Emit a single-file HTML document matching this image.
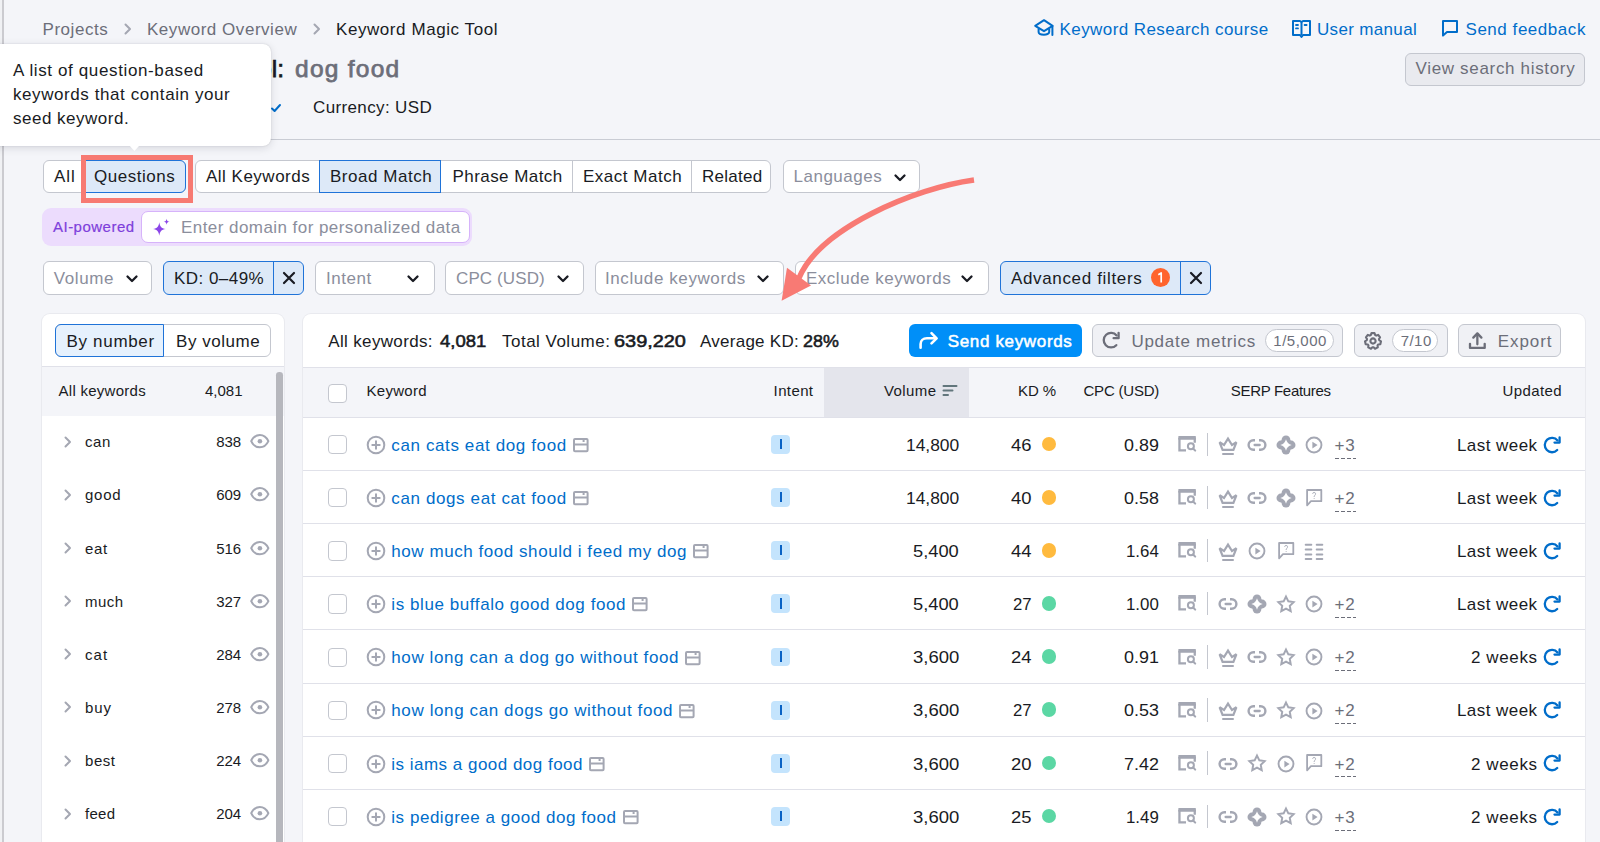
<!DOCTYPE html>
<html><head><meta charset="utf-8"><style>
html,body{margin:0;padding:0;}
body{width:1600px;height:842px;overflow:hidden;position:relative;background:#f4f5f9;font-family:"Liberation Sans",sans-serif;}
.t{position:absolute;white-space:nowrap;}
svg{position:absolute;overflow:visible;}
</style></head><body>
<div style="position:absolute;left:0.00px;top:0.00px;width:2.00px;height:842.00px;background:#f0f1f4"></div>
<div style="position:absolute;left:2.00px;top:0.00px;width:2.00px;height:842.00px;background:#cbcbd0"></div>
<div id="t1" class="t" style="left:42.50px;top:21.00px;font-size:17px;line-height:17px;color:#6c6e79;font-weight:400;letter-spacing:0.539px;">Projects</div>
<svg style="position:absolute;left:124.00px;top:23.00px;" width="8" height="12" viewBox="0 0 8 12" fill="none"><path d="M1.5 1.5 L6 6 L1.5 10.5" stroke="#a4a7b2" stroke-width="2" stroke-linecap="round" stroke-linejoin="round"/></svg>
<div id="t2" class="t" style="left:147.00px;top:21.00px;font-size:17px;line-height:17px;color:#6c6e79;font-weight:400;letter-spacing:0.531px;">Keyword Overview</div>
<svg style="position:absolute;left:313.00px;top:23.00px;" width="8" height="12" viewBox="0 0 8 12" fill="none"><path d="M1.5 1.5 L6 6 L1.5 10.5" stroke="#a4a7b2" stroke-width="2" stroke-linecap="round" stroke-linejoin="round"/></svg>
<div id="t3" class="t" style="left:336.00px;top:21.00px;font-size:17px;line-height:17px;color:#191b23;font-weight:400;letter-spacing:0.569px;">Keyword Magic Tool</div>
<svg style="position:absolute;left:1034.00px;top:19.00px;" width="20" height="18" viewBox="0 0 20 18" fill="none"><path d="M10 1.2 L1.2 6.8 L10 12.2 L18.6 6.8 Z" stroke="#006dca" stroke-width="2" stroke-linejoin="round"/><path d="M4.6 9.4 V13 C4.6 16.6 15.2 16.6 15.2 13 V9.4" stroke="#006dca" stroke-width="2"/><path d="M18.4 7 V16" stroke="#006dca" stroke-width="2" stroke-linecap="round"/></svg>
<div id="t4" class="t" style="left:1059.50px;top:21.00px;font-size:17px;line-height:17px;color:#006dca;font-weight:400;letter-spacing:0.423px;">Keyword Research course</div>
<svg style="position:absolute;left:1292.00px;top:19.00px;" width="19" height="19" viewBox="0 0 19 19" fill="none"><path d="M1 2 H8 L9.5 3 L11 2 H18 V16 H11 L9.5 18 L8 16 H1 Z" stroke="#006dca" stroke-width="2" stroke-linejoin="round"/><path d="M9.5 3 V16" stroke="#006dca" stroke-width="2"/><path d="M4 6 H6 M4 9.4 H6 M12.6 6 H14.6" stroke="#006dca" stroke-width="1.8" stroke-linecap="round"/></svg>
<div id="t5" class="t" style="left:1317.00px;top:21.00px;font-size:17px;line-height:17px;color:#006dca;font-weight:400;letter-spacing:0.332px;">User manual</div>
<svg style="position:absolute;left:1441.00px;top:19.00px;" width="18" height="18" viewBox="0 0 18 18" fill="none"><path d="M2 16.6 V2 H16 V13 H6 L2 16.6 Z" stroke="#006dca" stroke-width="2" stroke-linejoin="round"/></svg>
<div id="t6" class="t" style="left:1465.50px;top:21.00px;font-size:17px;line-height:17px;color:#006dca;font-weight:400;letter-spacing:0.538px;">Send feedback</div>
<div style="position:absolute;left:1404.50px;top:52.50px;width:180.50px;height:33.00px;background:#e9eaef;border:1px solid #c4c7cf;border-radius:6px;box-sizing:border-box"></div>
<div id="t7" class="t" style="left:1415.50px;top:60.00px;font-size:17px;line-height:17px;color:#6c6e79;font-weight:400;letter-spacing:0.672px;">View search history</div>
<div id="t8" class="t" style="left:284.00px;top:57.00px;font-size:24.5px;line-height:24.5px;color:#191b23;font-weight:400;letter-spacing:0.000px;-webkit-text-stroke:0.75px #191b23;transform:translateX(-100%)">Keyword Magic Tool:</div>
<div id="t9" class="t" style="left:295.00px;top:57.00px;font-size:24.5px;line-height:24.5px;color:#6c6e79;font-weight:400;letter-spacing:1.262px;-webkit-text-stroke:0.75px #6c6e79;">dog food</div>
<div id="t10" class="t" style="left:30.00px;top:99.00px;font-size:17px;line-height:17px;color:#191b23;font-weight:400;letter-spacing:0.000px;">Database: United States</div>
<svg style="position:absolute;left:270.00px;top:103.00px;" width="12" height="10" viewBox="0 0 12 10" fill="none"><path d="M2 5.5 L4.6 8 L10 2" stroke="#006dca" stroke-width="2" stroke-linecap="round" stroke-linejoin="round"/></svg>
<div id="t11" class="t" style="left:313.00px;top:99.00px;font-size:17px;line-height:17px;color:#191b23;font-weight:400;letter-spacing:0.366px;">Currency: USD</div>
<div style="position:absolute;left:4.00px;top:138.50px;width:1596.00px;height:1.00px;background:#c9ccd4"></div>
<div style="position:absolute;left:-10.00px;top:44.00px;width:281.00px;height:101.70px;background:#fff;border-radius:8px;box-shadow:0 2px 8px rgba(25,27,35,0.13),0 0 1.5px rgba(25,27,35,0.18)"></div>
<svg style="position:absolute;left:127.00px;top:144.00px;" width="16" height="8" viewBox="0 0 16 8" fill="none"><path d="M1 0 L7.4 7 L13.8 0 Z" fill="#fff"/></svg>
<div id="t12" class="t" style="left:13.00px;top:62.00px;font-size:17px;line-height:17px;color:#191b23;font-weight:400;letter-spacing:0.626px;">A list of question-based</div>
<div id="t13" class="t" style="left:13.00px;top:86.00px;font-size:17px;line-height:17px;color:#191b23;font-weight:400;letter-spacing:0.579px;">keywords that contain your</div>
<div id="t14" class="t" style="left:13.00px;top:110.00px;font-size:17px;line-height:17px;color:#191b23;font-weight:400;letter-spacing:0.506px;">seed keyword.</div>
<div style="position:absolute;left:42.50px;top:159.60px;width:143.00px;height:33.20px;background:#fff;border:1px solid #c4c7cf;border-radius:6px;box-sizing:border-box;"></div>
<div style="position:absolute;left:82.00px;top:159.60px;width:103.50px;height:33.20px;background:#dde9f8;border:1px solid #1f73d8;border-radius:0 6px 6px 0;box-sizing:border-box;"></div>
<div id="t15" class="t" style="left:54.00px;top:168.00px;font-size:17px;line-height:17px;color:#191b23;font-weight:400;letter-spacing:0.894px;">All</div>
<div id="t16" class="t" style="left:94.00px;top:168.00px;font-size:17px;line-height:17px;color:#191b23;font-weight:400;letter-spacing:0.517px;">Questions</div>
<div style="position:absolute;left:195.00px;top:159.60px;width:576.00px;height:33.20px;background:#fff;border:1px solid #c4c7cf;border-radius:6px;box-sizing:border-box;"></div>
<div style="position:absolute;left:318.75px;top:159.60px;width:122.50px;height:33.20px;background:#dde9f8;border:1px solid #1f73d8;border-radius:0;box-sizing:border-box;"></div>
<div style="position:absolute;left:572.20px;top:160.60px;width:1.00px;height:31.20px;background:#c4c7cf"></div>
<div style="position:absolute;left:690.70px;top:160.60px;width:1.00px;height:31.20px;background:#c4c7cf"></div>
<div id="t17" class="t" style="left:206.00px;top:168.00px;font-size:17px;line-height:17px;color:#191b23;font-weight:400;letter-spacing:0.493px;">All Keywords</div>
<div id="t18" class="t" style="left:330.00px;top:168.00px;font-size:17px;line-height:17px;color:#191b23;font-weight:400;letter-spacing:0.530px;">Broad Match</div>
<div id="t19" class="t" style="left:452.50px;top:168.00px;font-size:17px;line-height:17px;color:#191b23;font-weight:400;letter-spacing:0.436px;">Phrase Match</div>
<div id="t20" class="t" style="left:583.00px;top:168.00px;font-size:17px;line-height:17px;color:#191b23;font-weight:400;letter-spacing:0.515px;">Exact Match</div>
<div id="t21" class="t" style="left:702.00px;top:168.00px;font-size:17px;line-height:17px;color:#191b23;font-weight:400;letter-spacing:0.264px;">Related</div>
<div style="position:absolute;left:782.50px;top:159.60px;width:137.50px;height:33.20px;background:#fff;border:1px solid #c4c7cf;border-radius:6px;box-sizing:border-box;"></div>
<div id="t22" class="t" style="left:793.50px;top:168.00px;font-size:17px;line-height:17px;color:#8b8e9c;font-weight:400;letter-spacing:0.505px;">Languages</div>
<svg style="position:absolute;left:893.80px;top:174.30px;" width="12" height="8" viewBox="0 0 12 8" fill="none"><path d="M1.5 1.5 L6 6 L10.5 1.5" stroke="#191b23" stroke-width="2.3" stroke-linecap="round" stroke-linejoin="round"/></svg>
<div style="position:absolute;left:80.60px;top:155.00px;width:112.40px;height:47.50px;border:5.6px solid #f77a72;box-sizing:border-box"></div>
<div style="position:absolute;left:42.00px;top:207.80px;width:430.00px;height:38.20px;background:#ecdcfd;border-radius:9px"></div>
<div style="position:absolute;left:141.20px;top:210.60px;width:328.50px;height:32.80px;background:#fff;border:1px solid #d6b3fa;border-radius:7px;box-sizing:border-box"></div>
<div id="t23" class="t" style="left:53.00px;top:219.00px;font-size:15px;line-height:15px;color:#7e3fdb;font-weight:400;letter-spacing:0.482px;-webkit-text-stroke:0.2px #7e3fdb;">AI-powered</div>
<svg style="position:absolute;left:152.00px;top:217.50px;" width="19" height="19" viewBox="0 0 19 19" fill="none"><path d="M7.3 4.2 C7.9 8.6 9.3 10.2 13.6 11 C9.3 11.8 7.9 13.4 7.3 17.8 C6.7 13.4 5.3 11.8 1 11 C5.3 10.2 6.7 8.6 7.3 4.2 Z" fill="#8b45e8"/><path d="M14.6 0.8 C14.9 2.8 15.6 3.5 17.6 3.8 C15.6 4.1 14.9 4.8 14.6 6.8 C14.3 4.8 13.6 4.1 11.6 3.8 C13.6 3.5 14.3 2.8 14.6 0.8 Z" fill="#8b45e8"/></svg>
<div id="t24" class="t" style="left:181.00px;top:219.00px;font-size:17px;line-height:17px;color:#8b8e9c;font-weight:400;letter-spacing:0.442px;">Enter domain for personalized data</div>
<div style="position:absolute;left:42.50px;top:261.30px;width:109.70px;height:33.70px;background:#fff;border:1px solid #c4c7cf;border-radius:6px;box-sizing:border-box;"></div>
<div id="t25" class="t" style="left:53.80px;top:270.00px;font-size:17px;line-height:17px;color:#8b8e9c;font-weight:400;letter-spacing:0.596px;">Volume</div>
<svg style="position:absolute;left:125.80px;top:275.30px;" width="12" height="8" viewBox="0 0 12 8" fill="none"><path d="M1.5 1.5 L6 6 L10.5 1.5" stroke="#191b23" stroke-width="2.3" stroke-linecap="round" stroke-linejoin="round"/></svg>
<div style="position:absolute;left:163.00px;top:261.30px;width:141.00px;height:33.70px;background:#dde9f8;border:1px solid #1f73d8;border-radius:6px;box-sizing:border-box;"></div>
<div style="position:absolute;left:273.30px;top:262.30px;width:1.00px;height:31.70px;background:#1f73d8"></div>
<div id="t26" class="t" style="left:174.00px;top:270.00px;font-size:17px;line-height:17px;color:#191b23;font-weight:400;letter-spacing:0.460px;">KD: 0–49%</div>
<svg style="position:absolute;left:282.00px;top:271.00px;" width="14" height="14" viewBox="0 0 14 14" fill="none"><path d="M2 2 L12 12 M12 2 L2 12" stroke="#191b23" stroke-width="2.2" stroke-linecap="round"/></svg>
<div style="position:absolute;left:314.50px;top:261.30px;width:120.00px;height:33.70px;background:#fff;border:1px solid #c4c7cf;border-radius:6px;box-sizing:border-box;"></div>
<div id="t27" class="t" style="left:326.00px;top:270.00px;font-size:17px;line-height:17px;color:#8b8e9c;font-weight:400;letter-spacing:0.529px;">Intent</div>
<svg style="position:absolute;left:407.30px;top:275.30px;" width="12" height="8" viewBox="0 0 12 8" fill="none"><path d="M1.5 1.5 L6 6 L10.5 1.5" stroke="#191b23" stroke-width="2.3" stroke-linecap="round" stroke-linejoin="round"/></svg>
<div style="position:absolute;left:445.00px;top:261.30px;width:138.80px;height:33.70px;background:#fff;border:1px solid #c4c7cf;border-radius:6px;box-sizing:border-box;"></div>
<div id="t28" class="t" style="left:456.00px;top:270.00px;font-size:17px;line-height:17px;color:#8b8e9c;font-weight:400;letter-spacing:0.106px;">CPC (USD)</div>
<svg style="position:absolute;left:556.80px;top:275.30px;" width="12" height="8" viewBox="0 0 12 8" fill="none"><path d="M1.5 1.5 L6 6 L10.5 1.5" stroke="#191b23" stroke-width="2.3" stroke-linecap="round" stroke-linejoin="round"/></svg>
<div style="position:absolute;left:594.50px;top:261.30px;width:189.30px;height:33.70px;background:#fff;border:1px solid #c4c7cf;border-radius:6px;box-sizing:border-box;"></div>
<div id="t29" class="t" style="left:605.00px;top:270.00px;font-size:17px;line-height:17px;color:#8b8e9c;font-weight:400;letter-spacing:0.589px;">Include keywords</div>
<svg style="position:absolute;left:757.30px;top:275.30px;" width="12" height="8" viewBox="0 0 12 8" fill="none"><path d="M1.5 1.5 L6 6 L10.5 1.5" stroke="#191b23" stroke-width="2.3" stroke-linecap="round" stroke-linejoin="round"/></svg>
<div style="position:absolute;left:795.30px;top:261.30px;width:193.70px;height:33.70px;background:#fff;border:1px solid #c4c7cf;border-radius:6px;box-sizing:border-box;"></div>
<div id="t30" class="t" style="left:806.00px;top:270.00px;font-size:17px;line-height:17px;color:#8b8e9c;font-weight:400;letter-spacing:0.512px;">Exclude keywords</div>
<svg style="position:absolute;left:961.30px;top:275.30px;" width="12" height="8" viewBox="0 0 12 8" fill="none"><path d="M1.5 1.5 L6 6 L10.5 1.5" stroke="#191b23" stroke-width="2.3" stroke-linecap="round" stroke-linejoin="round"/></svg>
<div style="position:absolute;left:999.80px;top:261.30px;width:211.00px;height:33.70px;background:#dde9f8;border:1px solid #1f73d8;border-radius:6px;box-sizing:border-box;"></div>
<div style="position:absolute;left:1180.40px;top:262.30px;width:1.00px;height:31.70px;background:#1f73d8"></div>
<div id="t31" class="t" style="left:1011.00px;top:270.00px;font-size:17px;line-height:17px;color:#191b23;font-weight:400;letter-spacing:0.649px;">Advanced filters</div>
<div style="position:absolute;left:1151.00px;top:268.10px;width:19.20px;height:19.20px;background:#ff642d;border-radius:50%"></div>
<svg style="position:absolute;left:1150.00px;top:268.00px;" width="20" height="20" viewBox="0 0 20 20" fill="none"><path d="M8.3 6.8 L11.2 5 V14.6" stroke="#fff" stroke-width="1.7" stroke-linejoin="round" fill="none"/></svg>
<svg style="position:absolute;left:1189.00px;top:271.00px;" width="14" height="14" viewBox="0 0 14 14" fill="none"><path d="M2 2 L12 12 M12 2 L2 12" stroke="#191b23" stroke-width="2.2" stroke-linecap="round"/></svg>
<div style="position:absolute;left:42.00px;top:313.75px;width:242.00px;height:560.00px;background:#fff;border-radius:8px;box-shadow:0 0 0 1px #e9eaef"></div>
<div style="position:absolute;left:55.00px;top:324.30px;width:216.00px;height:32.70px;background:#fff;border:1px solid #c4c7cf;border-radius:6px;box-sizing:border-box;"></div>
<div style="position:absolute;left:55.00px;top:324.30px;width:109.00px;height:32.70px;background:#e6f1fd;border:1px solid #1f73d8;border-radius:6px 0 0 6px;box-sizing:border-box;"></div>
<div id="t33" class="t" style="left:66.50px;top:333.00px;font-size:17px;line-height:17px;color:#191b23;font-weight:400;letter-spacing:0.684px;">By number</div>
<div id="t34" class="t" style="left:176.00px;top:333.00px;font-size:17px;line-height:17px;color:#191b23;font-weight:400;letter-spacing:0.540px;">By volume</div>
<div style="position:absolute;left:42.00px;top:366.00px;width:242.00px;height:1.00px;background:#e0e1e9"></div>
<div style="position:absolute;left:42.00px;top:367.00px;width:242.00px;height:48.50px;background:#f4f5f9"></div>
<div id="t35" class="t" style="left:58.60px;top:383.00px;font-size:15px;line-height:15px;color:#191b23;font-weight:400;letter-spacing:0.259px;">All keywords</div>
<div id="t36" class="t" style="left:205.00px;top:383.00px;font-size:15px;line-height:15px;color:#191b23;font-weight:400;letter-spacing:0.003px;">4,081</div>
<div style="position:absolute;left:276.00px;top:372.40px;width:6.60px;height:500.00px;background:#b6b7bd;border-radius:3.3px"></div>
<svg style="position:absolute;left:63.50px;top:435.80px;" width="8" height="12" viewBox="0 0 8 12" fill="none"><path d="M1.5 1.5 L6 6 L1.5 10.5" stroke="#a4a7b2" stroke-width="2" stroke-linecap="round" stroke-linejoin="round"/></svg>
<div id="t37" class="t" style="left:85.00px;top:434.00px;font-size:15px;line-height:15px;color:#191b23;font-weight:400;letter-spacing:0.531px;">can</div>
<div id="t38" class="t" style="left:241.20px;top:434.00px;font-size:15px;line-height:15px;color:#191b23;font-weight:400;letter-spacing:0.000px;transform:translateX(-100%)">838</div>
<svg style="position:absolute;left:249.80px;top:434.30px;" width="20" height="15" viewBox="0 0 20 15" fill="none"><path d="M1.2 7.2 C5 -1 14.6 -1 18.4 7.2 C14.6 15.4 5 15.4 1.2 7.2 Z" stroke="#a4a7b3" stroke-width="2" stroke-linejoin="round"/><circle cx="9.9" cy="7.2" r="2.3" fill="#a4a7b3"/></svg>
<svg style="position:absolute;left:63.50px;top:488.93px;" width="8" height="12" viewBox="0 0 8 12" fill="none"><path d="M1.5 1.5 L6 6 L1.5 10.5" stroke="#a4a7b2" stroke-width="2" stroke-linecap="round" stroke-linejoin="round"/></svg>
<div id="t39" class="t" style="left:85.00px;top:487.00px;font-size:15px;line-height:15px;color:#191b23;font-weight:400;letter-spacing:0.724px;">good</div>
<div id="t40" class="t" style="left:241.20px;top:487.00px;font-size:15px;line-height:15px;color:#191b23;font-weight:400;letter-spacing:0.000px;transform:translateX(-100%)">609</div>
<svg style="position:absolute;left:249.80px;top:487.43px;" width="20" height="15" viewBox="0 0 20 15" fill="none"><path d="M1.2 7.2 C5 -1 14.6 -1 18.4 7.2 C14.6 15.4 5 15.4 1.2 7.2 Z" stroke="#a4a7b3" stroke-width="2" stroke-linejoin="round"/><circle cx="9.9" cy="7.2" r="2.3" fill="#a4a7b3"/></svg>
<svg style="position:absolute;left:63.50px;top:542.06px;" width="8" height="12" viewBox="0 0 8 12" fill="none"><path d="M1.5 1.5 L6 6 L1.5 10.5" stroke="#a4a7b2" stroke-width="2" stroke-linecap="round" stroke-linejoin="round"/></svg>
<div id="t41" class="t" style="left:85.00px;top:541.00px;font-size:15px;line-height:15px;color:#191b23;font-weight:400;letter-spacing:0.596px;">eat</div>
<div id="t42" class="t" style="left:241.20px;top:541.00px;font-size:15px;line-height:15px;color:#191b23;font-weight:400;letter-spacing:0.000px;transform:translateX(-100%)">516</div>
<svg style="position:absolute;left:249.80px;top:540.56px;" width="20" height="15" viewBox="0 0 20 15" fill="none"><path d="M1.2 7.2 C5 -1 14.6 -1 18.4 7.2 C14.6 15.4 5 15.4 1.2 7.2 Z" stroke="#a4a7b3" stroke-width="2" stroke-linejoin="round"/><circle cx="9.9" cy="7.2" r="2.3" fill="#a4a7b3"/></svg>
<svg style="position:absolute;left:63.50px;top:595.19px;" width="8" height="12" viewBox="0 0 8 12" fill="none"><path d="M1.5 1.5 L6 6 L1.5 10.5" stroke="#a4a7b2" stroke-width="2" stroke-linecap="round" stroke-linejoin="round"/></svg>
<div id="t43" class="t" style="left:85.00px;top:594.00px;font-size:15px;line-height:15px;color:#191b23;font-weight:400;letter-spacing:0.457px;">much</div>
<div id="t44" class="t" style="left:241.20px;top:594.00px;font-size:15px;line-height:15px;color:#191b23;font-weight:400;letter-spacing:0.000px;transform:translateX(-100%)">327</div>
<svg style="position:absolute;left:249.80px;top:593.69px;" width="20" height="15" viewBox="0 0 20 15" fill="none"><path d="M1.2 7.2 C5 -1 14.6 -1 18.4 7.2 C14.6 15.4 5 15.4 1.2 7.2 Z" stroke="#a4a7b3" stroke-width="2" stroke-linejoin="round"/><circle cx="9.9" cy="7.2" r="2.3" fill="#a4a7b3"/></svg>
<svg style="position:absolute;left:63.50px;top:648.32px;" width="8" height="12" viewBox="0 0 8 12" fill="none"><path d="M1.5 1.5 L6 6 L1.5 10.5" stroke="#a4a7b2" stroke-width="2" stroke-linecap="round" stroke-linejoin="round"/></svg>
<div id="t45" class="t" style="left:85.00px;top:647.00px;font-size:15px;line-height:15px;color:#191b23;font-weight:400;letter-spacing:1.018px;">cat</div>
<div id="t46" class="t" style="left:241.20px;top:647.00px;font-size:15px;line-height:15px;color:#191b23;font-weight:400;letter-spacing:0.000px;transform:translateX(-100%)">284</div>
<svg style="position:absolute;left:249.80px;top:646.82px;" width="20" height="15" viewBox="0 0 20 15" fill="none"><path d="M1.2 7.2 C5 -1 14.6 -1 18.4 7.2 C14.6 15.4 5 15.4 1.2 7.2 Z" stroke="#a4a7b3" stroke-width="2" stroke-linejoin="round"/><circle cx="9.9" cy="7.2" r="2.3" fill="#a4a7b3"/></svg>
<svg style="position:absolute;left:63.50px;top:701.45px;" width="8" height="12" viewBox="0 0 8 12" fill="none"><path d="M1.5 1.5 L6 6 L1.5 10.5" stroke="#a4a7b2" stroke-width="2" stroke-linecap="round" stroke-linejoin="round"/></svg>
<div id="t47" class="t" style="left:85.00px;top:700.00px;font-size:15px;line-height:15px;color:#191b23;font-weight:400;letter-spacing:0.933px;">buy</div>
<div id="t48" class="t" style="left:241.20px;top:700.00px;font-size:15px;line-height:15px;color:#191b23;font-weight:400;letter-spacing:0.000px;transform:translateX(-100%)">278</div>
<svg style="position:absolute;left:249.80px;top:699.95px;" width="20" height="15" viewBox="0 0 20 15" fill="none"><path d="M1.2 7.2 C5 -1 14.6 -1 18.4 7.2 C14.6 15.4 5 15.4 1.2 7.2 Z" stroke="#a4a7b3" stroke-width="2" stroke-linejoin="round"/><circle cx="9.9" cy="7.2" r="2.3" fill="#a4a7b3"/></svg>
<svg style="position:absolute;left:63.50px;top:754.58px;" width="8" height="12" viewBox="0 0 8 12" fill="none"><path d="M1.5 1.5 L6 6 L1.5 10.5" stroke="#a4a7b2" stroke-width="2" stroke-linecap="round" stroke-linejoin="round"/></svg>
<div id="t49" class="t" style="left:85.00px;top:753.00px;font-size:15px;line-height:15px;color:#191b23;font-weight:400;letter-spacing:0.563px;">best</div>
<div id="t50" class="t" style="left:241.20px;top:753.00px;font-size:15px;line-height:15px;color:#191b23;font-weight:400;letter-spacing:0.000px;transform:translateX(-100%)">224</div>
<svg style="position:absolute;left:249.80px;top:753.08px;" width="20" height="15" viewBox="0 0 20 15" fill="none"><path d="M1.2 7.2 C5 -1 14.6 -1 18.4 7.2 C14.6 15.4 5 15.4 1.2 7.2 Z" stroke="#a4a7b3" stroke-width="2" stroke-linejoin="round"/><circle cx="9.9" cy="7.2" r="2.3" fill="#a4a7b3"/></svg>
<svg style="position:absolute;left:63.50px;top:807.71px;" width="8" height="12" viewBox="0 0 8 12" fill="none"><path d="M1.5 1.5 L6 6 L1.5 10.5" stroke="#a4a7b2" stroke-width="2" stroke-linecap="round" stroke-linejoin="round"/></svg>
<div id="t51" class="t" style="left:85.00px;top:806.00px;font-size:15px;line-height:15px;color:#191b23;font-weight:400;letter-spacing:0.285px;">feed</div>
<div id="t52" class="t" style="left:241.20px;top:806.00px;font-size:15px;line-height:15px;color:#191b23;font-weight:400;letter-spacing:0.000px;transform:translateX(-100%)">204</div>
<svg style="position:absolute;left:249.80px;top:806.21px;" width="20" height="15" viewBox="0 0 20 15" fill="none"><path d="M1.2 7.2 C5 -1 14.6 -1 18.4 7.2 C14.6 15.4 5 15.4 1.2 7.2 Z" stroke="#a4a7b3" stroke-width="2" stroke-linejoin="round"/><circle cx="9.9" cy="7.2" r="2.3" fill="#a4a7b3"/></svg>
<div style="position:absolute;left:303.00px;top:313.50px;width:1282.00px;height:560.00px;background:#fff;border-radius:8px;box-shadow:0 0 0 1px #e9eaef"></div>
<div id="t53" class="t" style="left:328.30px;top:333.00px;font-size:17px;line-height:17px;color:#191b23;font-weight:400;letter-spacing:0.337px;">All keywords:</div>
<div id="t54" class="t" style="left:439.70px;top:333.00px;font-size:17px;line-height:17px;color:#191b23;font-weight:400;transform-origin:0 0;transform:scaleX(1.0859);-webkit-text-stroke:0.55px #191b23;">4,081</div>
<div id="t55" class="t" style="left:502.00px;top:333.00px;font-size:17px;line-height:17px;color:#191b23;font-weight:400;letter-spacing:0.485px;">Total Volume:</div>
<div id="t56" class="t" style="left:613.80px;top:333.00px;font-size:17px;line-height:17px;color:#191b23;font-weight:400;transform-origin:0 0;transform:scaleX(1.1704);-webkit-text-stroke:0.55px #191b23;">639,220</div>
<div id="t57" class="t" style="left:700.00px;top:333.00px;font-size:17px;line-height:17px;color:#191b23;font-weight:400;letter-spacing:0.261px;">Average KD:</div>
<div id="t58" class="t" style="left:803.00px;top:333.00px;font-size:17px;line-height:17px;color:#191b23;font-weight:400;transform-origin:0 0;transform:scaleX(1.0515);-webkit-text-stroke:0.55px #191b23;">28%</div>
<div style="position:absolute;left:908.75px;top:323.75px;width:173.30px;height:33.50px;background:#008ff8;border-radius:6px"></div>
<svg style="position:absolute;left:900.00px;top:320.00px;" width="60" height="40" viewBox="900 320 60 40" fill="none"><path d="M920.6 347.8 V344 C920.6 340.6 923 338.3 927 338.3 H936" stroke="#fff" stroke-width="2.6" stroke-linecap="round"/><path d="M931.5 333.2 L936.6 338.3 L931.5 343.4" stroke="#fff" stroke-width="2.6" stroke-linecap="round" stroke-linejoin="round"/></svg>
<div id="t59" class="t" style="left:947.70px;top:333.00px;font-size:17px;line-height:17px;color:#fff;font-weight:400;letter-spacing:0.663px;-webkit-text-stroke:0.5px #fff;">Send keywords</div>
<div style="position:absolute;left:1092.40px;top:324.00px;width:251.00px;height:33.40px;background:#f0f1f5;border:1px solid #c4c7cf;border-radius:6px;box-sizing:border-box;"></div>
<svg style="position:absolute;left:1101.00px;top:330.30px;" width="20" height="20" viewBox="-10 -10 20 20" fill="none"><path d="M5.3 5.2 A7.3 7.3 0 1 1 5.6 -4.6" stroke="#6c6e79" stroke-width="2.3" stroke-linecap="round"/><path d="M2.6 -1.8 H7.6 V-7.2" stroke="#6c6e79" stroke-width="2.3" stroke-linecap="round" stroke-linejoin="round"/></svg>
<div id="t60" class="t" style="left:1131.40px;top:333.00px;font-size:17px;line-height:17px;color:#6c6e79;font-weight:400;letter-spacing:0.736px;">Update metrics</div>
<div style="position:absolute;left:1265.20px;top:329.30px;width:68.50px;height:22.90px;background:#fff;border:1px solid #c4c7cf;border-radius:12px;box-sizing:border-box"></div>
<div id="t61" class="t" style="left:1273.30px;top:333.00px;font-size:15px;line-height:15px;color:#6c6e79;font-weight:400;letter-spacing:0.499px;">1/5,000</div>
<div style="position:absolute;left:1353.75px;top:324.00px;width:94.00px;height:33.40px;background:#f0f1f5;border:1px solid #c4c7cf;border-radius:6px;box-sizing:border-box;"></div>
<svg style="position:absolute;left:1362.70px;top:330.70px;" width="20" height="20" viewBox="-10 -10 20 20" fill="none"><path d="M-2.22 -5.90 L-1.51 -7.86 L1.51 -7.86 L2.22 -5.90 L3.23 -5.41 L5.20 -6.08 L7.08 -3.72 L5.99 -1.94 L6.24 -0.85 L8.00 0.28 L7.32 3.22 L5.25 3.48 L4.56 4.35 L4.77 6.42 L2.05 7.73 L0.56 6.28 L-0.56 6.28 L-2.05 7.73 L-4.77 6.42 L-4.56 4.35 L-5.25 3.48 L-7.32 3.22 L-8.00 0.28 L-6.24 -0.85 L-5.99 -1.94 L-7.08 -3.72 L-5.20 -6.08 L-3.23 -5.41 Z" stroke="#6c6e79" stroke-width="2.1" stroke-linejoin="round"/><circle cx="0" cy="0" r="2.6" stroke="#6c6e79" stroke-width="2.1"/></svg>
<div style="position:absolute;left:1392.40px;top:329.30px;width:46.10px;height:22.90px;background:#fff;border:1px solid #c4c7cf;border-radius:12px;box-sizing:border-box"></div>
<div id="t62" class="t" style="left:1400.70px;top:333.00px;font-size:15px;line-height:15px;color:#6c6e79;font-weight:400;letter-spacing:0.449px;">7/10</div>
<div style="position:absolute;left:1458.30px;top:324.00px;width:102.40px;height:33.40px;background:#f0f1f5;border:1px solid #c4c7cf;border-radius:6px;box-sizing:border-box;"></div>
<svg style="position:absolute;left:1468.00px;top:332.00px;" width="19" height="17" viewBox="0 0 19 17" fill="none"><path d="M2 11.8 V15.9 H16.7 V11.8" stroke="#6c6e79" stroke-width="2.3" stroke-linejoin="round" stroke-linecap="round"/><path d="M9.35 12.3 V2" stroke="#6c6e79" stroke-width="2.3" stroke-linecap="round"/><path d="M5.3 5.6 L9.35 1.4 L13.4 5.6" stroke="#6c6e79" stroke-width="2.3" stroke-linecap="round" stroke-linejoin="round"/></svg>
<div id="t63" class="t" style="left:1497.75px;top:333.00px;font-size:17px;line-height:17px;color:#6c6e79;font-weight:400;letter-spacing:0.909px;">Export</div>
<div style="position:absolute;left:303.00px;top:366.60px;width:1282.00px;height:51.40px;background:#f4f5f9;border-top:1px solid #e0e1e9;border-bottom:1px solid #e0e1e9;box-sizing:border-box"></div>
<div style="position:absolute;left:824.40px;top:368.00px;width:144.40px;height:48.50px;background:#e4e5ec"></div>
<div style="position:absolute;left:327.60px;top:384.20px;width:19.20px;height:19.20px;background:#fff;border:1px solid #c4c7cf;border-radius:4px;box-sizing:border-box"></div>
<div id="t64" class="t" style="left:366.50px;top:383.00px;font-size:15px;line-height:15px;color:#191b23;font-weight:400;letter-spacing:0.280px;">Keyword</div>
<div id="t65" class="t" style="left:773.60px;top:383.00px;font-size:15px;line-height:15px;color:#191b23;font-weight:400;letter-spacing:0.383px;">Intent</div>
<div id="t66" class="t" style="left:884.00px;top:383.00px;font-size:15px;line-height:15px;color:#191b23;font-weight:400;letter-spacing:0.401px;">Volume</div>
<svg style="position:absolute;left:941.50px;top:384.00px;" width="16" height="14" viewBox="0 0 16 14" fill="none"><path d="M1.5 2 H14.5 M1.5 6.5 H10.5 M1.5 11 H6" stroke="#62767c" stroke-width="2" stroke-linecap="round"/></svg>
<div id="t67" class="t" style="left:1018.00px;top:383.00px;font-size:15px;line-height:15px;color:#191b23;font-weight:400;letter-spacing:-0.098px;">KD %</div>
<div id="t68" class="t" style="left:1083.50px;top:383.00px;font-size:15px;line-height:15px;color:#191b23;font-weight:400;letter-spacing:-0.208px;">CPC (USD)</div>
<div id="t69" class="t" style="left:1230.80px;top:383.00px;font-size:15px;line-height:15px;color:#191b23;font-weight:400;letter-spacing:-0.308px;">SERP Features</div>
<div id="t70" class="t" style="left:1502.50px;top:383.00px;font-size:15px;line-height:15px;color:#191b23;font-weight:400;letter-spacing:0.389px;">Updated</div>
<div style="position:absolute;left:303.00px;top:470.10px;width:1282.00px;height:1.00px;background:#e0e1e9"></div>
<div style="position:absolute;left:327.60px;top:435.10px;width:19.20px;height:19.20px;background:#fff;border:1px solid #c4c7cf;border-radius:4px;box-sizing:border-box"></div>
<svg style="position:absolute;left:363.70px;top:432.80px;" width="24" height="24" viewBox="-12 -12 24 24" fill="none"><circle cx="0" cy="0" r="8.3" stroke="#a4a7b3" stroke-width="2"/><path d="M0 -3.7 V3.7 M-3.7 0 H3.7" stroke="#a4a7b3" stroke-width="2" stroke-linecap="round"/></svg>
<div id="t71" class="t" style="left:391.30px;top:437.00px;font-size:17px;line-height:17px;color:#006dca;font-weight:400;letter-spacing:0.616px;">can cats eat dog food</div>
<svg style="position:absolute;left:572.70px;top:438.00px;" width="17" height="16" viewBox="0 0 17 16" fill="none"><rect x="1" y="1" width="13.6" height="12.2" rx="1" stroke="#a4a7b3" stroke-width="2"/><path d="M1 6.4 H14.6 M10.6 2 V4" stroke="#a4a7b3" stroke-width="2"/></svg>
<div style="position:absolute;left:771.10px;top:435.00px;width:19.20px;height:18.90px;background:#c4e4fd;border-radius:4px"></div>
<div style="position:absolute;left:779.80px;top:438.90px;width:2.20px;height:10.30px;background:#0a62c4"></div>
<div id="t72" class="t" style="left:906.20px;top:437.00px;font-size:17px;line-height:17px;color:#191b23;font-weight:400;transform-origin:0 0;transform:scaleX(1.0234);">14,800</div>
<div id="t73" class="t" style="left:1011.11px;top:437.00px;font-size:17px;line-height:17px;color:#191b23;font-weight:400;transform-origin:0 0;transform:scaleX(1.0837);">46</div>
<div style="position:absolute;left:1041.60px;top:436.75px;width:14.70px;height:14.70px;border-radius:50%;background:#ffba3e"></div>
<div id="t74" class="t" style="left:1123.90px;top:437.00px;font-size:17px;line-height:17px;color:#191b23;font-weight:400;transform-origin:0 0;transform:scaleX(1.0531);">0.89</div>
<svg style="position:absolute;left:1177.00px;top:435.10px;" width="20" height="18" viewBox="0 0 20 18" fill="none"><path d="M9 15.45 H2.45 V3 M17.75 3 V7.7" stroke="#a4a7b3" stroke-width="2.3"/><rect x="1.3" y="1.1" width="17.6" height="3.6" rx="0.6" fill="#a4a7b3"/><circle cx="13.9" cy="11.2" r="3" stroke="#a4a7b3" stroke-width="2"/><path d="M16.1 13.4 L18.2 15.6" stroke="#a4a7b3" stroke-width="2.1" stroke-linecap="round"/></svg>
<div style="position:absolute;left:1207.20px;top:432.60px;width:1.20px;height:23.50px;background:#c4c7cf"></div>
<svg style="position:absolute;left:1215.60px;top:432.50px;" width="24" height="24" viewBox="-12 -12 24 24" fill="none"><path d="M-8.4 -2.7 L-4 0 L0 -6.4 L4 0 L8.4 -2.7 L5.4 4.8 H-5.4 Z" stroke="#a4a7b3" stroke-width="2.2" stroke-linejoin="miter" stroke-miterlimit="3"/><path d="M-5 9 H5" stroke="#a4a7b3" stroke-width="2" stroke-linecap="round"/></svg>
<svg style="position:absolute;left:1244.55px;top:432.90px;" width="24" height="24" viewBox="-12 -12 24 24" fill="none"><path d="M-2 -4.8 H-3.6 A4.8 4.8 0 0 0 -3.6 4.8 H-2 M2 -4.8 H3.6 A4.8 4.8 0 0 1 3.6 4.8 H2" stroke="#a4a7b3" stroke-width="2.4"/><path d="M-2.4 0 H2.7" stroke="#a4a7b3" stroke-width="2.3" stroke-linecap="round"/></svg>
<svg style="position:absolute;left:1273.50px;top:432.90px;" width="24" height="24" viewBox="-12 -12 24 24" fill="none"><circle cx="0" cy="-5.1" r="4.4" fill="#a4a7b3"/><circle cx="0" cy="5.1" r="4.4" fill="#a4a7b3"/><circle cx="-5.1" cy="0" r="4.4" fill="#a4a7b3"/><circle cx="5.1" cy="0" r="4.4" fill="#a4a7b3"/><circle cx="0" cy="0" r="6.5" fill="#a4a7b3"/><path d="M0 -5.7 Q1.1 -1.1 5.7 0 Q1.1 1.1 0 5.7 Q-1.1 1.1 -5.7 0 Q-1.1 -1.1 0 -5.7 Z" fill="#fff"/></svg>
<svg style="position:absolute;left:1302.45px;top:432.90px;" width="24" height="24" viewBox="-12 -12 24 24" fill="none"><circle cx="0" cy="0" r="7.45" stroke="#a4a7b3" stroke-width="1.9"/><path d="M-1.6 -3.2 L3.6 0.1 L-1.6 3.5 Z" fill="#a4a7b3"/></svg>
<div id="t75" class="t" style="left:1334.60px;top:437.00px;font-size:17px;line-height:17px;color:#6c6e79;font-weight:400;letter-spacing:0.000px;letter-spacing:0.7px">+3</div>
<div style="position:absolute;left:1334.60px;top:457.60px;width:21.50px;height:1.00px;background:repeating-linear-gradient(90deg,#6c6e79 0 4px,transparent 4px 6px)"></div>
<div id="t76" class="t" style="left:1456.90px;top:437.00px;font-size:17px;line-height:17px;color:#191b23;font-weight:400;letter-spacing:0.456px;">Last week</div>
<svg style="position:absolute;left:1541.60px;top:434.65px;" width="20" height="20" viewBox="-10 -10 20 20" fill="none"><path d="M5.2 5 A7.2 7.2 0 1 1 5.5 -4.6" stroke="#006dca" stroke-width="2.3" stroke-linecap="round"/><path d="M2.5 -2.4 H7.6 V-7.6" stroke="#006dca" stroke-width="2.3" stroke-linecap="round" stroke-linejoin="round"/></svg>
<div style="position:absolute;left:303.00px;top:523.23px;width:1282.00px;height:1.00px;background:#e0e1e9"></div>
<div style="position:absolute;left:327.60px;top:488.23px;width:19.20px;height:19.20px;background:#fff;border:1px solid #c4c7cf;border-radius:4px;box-sizing:border-box"></div>
<svg style="position:absolute;left:363.70px;top:485.93px;" width="24" height="24" viewBox="-12 -12 24 24" fill="none"><circle cx="0" cy="0" r="8.3" stroke="#a4a7b3" stroke-width="2"/><path d="M0 -3.7 V3.7 M-3.7 0 H3.7" stroke="#a4a7b3" stroke-width="2" stroke-linecap="round"/></svg>
<div id="t77" class="t" style="left:391.30px;top:490.00px;font-size:17px;line-height:17px;color:#006dca;font-weight:400;letter-spacing:0.616px;">can dogs eat cat food</div>
<svg style="position:absolute;left:572.70px;top:491.13px;" width="17" height="16" viewBox="0 0 17 16" fill="none"><rect x="1" y="1" width="13.6" height="12.2" rx="1" stroke="#a4a7b3" stroke-width="2"/><path d="M1 6.4 H14.6 M10.6 2 V4" stroke="#a4a7b3" stroke-width="2"/></svg>
<div style="position:absolute;left:771.10px;top:488.13px;width:19.20px;height:18.90px;background:#c4e4fd;border-radius:4px"></div>
<div style="position:absolute;left:779.80px;top:492.03px;width:2.20px;height:10.30px;background:#0a62c4"></div>
<div id="t78" class="t" style="left:906.20px;top:490.00px;font-size:17px;line-height:17px;color:#191b23;font-weight:400;transform-origin:0 0;transform:scaleX(1.0234);">14,800</div>
<div id="t79" class="t" style="left:1011.11px;top:490.00px;font-size:17px;line-height:17px;color:#191b23;font-weight:400;transform-origin:0 0;transform:scaleX(1.0837);">40</div>
<div style="position:absolute;left:1041.60px;top:489.88px;width:14.70px;height:14.70px;border-radius:50%;background:#ffba3e"></div>
<div id="t80" class="t" style="left:1123.90px;top:490.00px;font-size:17px;line-height:17px;color:#191b23;font-weight:400;transform-origin:0 0;transform:scaleX(1.0531);">0.58</div>
<svg style="position:absolute;left:1177.00px;top:488.23px;" width="20" height="18" viewBox="0 0 20 18" fill="none"><path d="M9 15.45 H2.45 V3 M17.75 3 V7.7" stroke="#a4a7b3" stroke-width="2.3"/><rect x="1.3" y="1.1" width="17.6" height="3.6" rx="0.6" fill="#a4a7b3"/><circle cx="13.9" cy="11.2" r="3" stroke="#a4a7b3" stroke-width="2"/><path d="M16.1 13.4 L18.2 15.6" stroke="#a4a7b3" stroke-width="2.1" stroke-linecap="round"/></svg>
<div style="position:absolute;left:1207.20px;top:485.73px;width:1.20px;height:23.50px;background:#c4c7cf"></div>
<svg style="position:absolute;left:1215.60px;top:485.63px;" width="24" height="24" viewBox="-12 -12 24 24" fill="none"><path d="M-8.4 -2.7 L-4 0 L0 -6.4 L4 0 L8.4 -2.7 L5.4 4.8 H-5.4 Z" stroke="#a4a7b3" stroke-width="2.2" stroke-linejoin="miter" stroke-miterlimit="3"/><path d="M-5 9 H5" stroke="#a4a7b3" stroke-width="2" stroke-linecap="round"/></svg>
<svg style="position:absolute;left:1244.55px;top:486.03px;" width="24" height="24" viewBox="-12 -12 24 24" fill="none"><path d="M-2 -4.8 H-3.6 A4.8 4.8 0 0 0 -3.6 4.8 H-2 M2 -4.8 H3.6 A4.8 4.8 0 0 1 3.6 4.8 H2" stroke="#a4a7b3" stroke-width="2.4"/><path d="M-2.4 0 H2.7" stroke="#a4a7b3" stroke-width="2.3" stroke-linecap="round"/></svg>
<svg style="position:absolute;left:1273.50px;top:486.03px;" width="24" height="24" viewBox="-12 -12 24 24" fill="none"><circle cx="0" cy="-5.1" r="4.4" fill="#a4a7b3"/><circle cx="0" cy="5.1" r="4.4" fill="#a4a7b3"/><circle cx="-5.1" cy="0" r="4.4" fill="#a4a7b3"/><circle cx="5.1" cy="0" r="4.4" fill="#a4a7b3"/><circle cx="0" cy="0" r="6.5" fill="#a4a7b3"/><path d="M0 -5.7 Q1.1 -1.1 5.7 0 Q1.1 1.1 0 5.7 Q-1.1 1.1 -5.7 0 Q-1.1 -1.1 0 -5.7 Z" fill="#fff"/></svg>
<svg style="position:absolute;left:1302.45px;top:485.63px;" width="24" height="24" viewBox="-12 -12 24 24" fill="none"><path d="M-6.9 7.3 V-8 H7.3 V3.2 H-3 Z" stroke="#a4a7b3" stroke-width="1.8" stroke-linejoin="round"/><path d="M-1.4 -4.2 C-1.4 -6 1.6 -6 1.6 -4.2 C1.6 -2.8 0.1 -2.8 0.1 -1" stroke="#a4a7b3" stroke-width="0.9" fill="none"/><circle cx="0.1" cy="0.6" r="0.5" fill="#a4a7b3"/></svg>
<div id="t81" class="t" style="left:1334.60px;top:490.00px;font-size:17px;line-height:17px;color:#6c6e79;font-weight:400;letter-spacing:0.000px;letter-spacing:0.7px">+2</div>
<div style="position:absolute;left:1334.60px;top:510.73px;width:21.50px;height:1.00px;background:repeating-linear-gradient(90deg,#6c6e79 0 4px,transparent 4px 6px)"></div>
<div id="t82" class="t" style="left:1456.90px;top:490.00px;font-size:17px;line-height:17px;color:#191b23;font-weight:400;letter-spacing:0.456px;">Last week</div>
<svg style="position:absolute;left:1541.60px;top:487.78px;" width="20" height="20" viewBox="-10 -10 20 20" fill="none"><path d="M5.2 5 A7.2 7.2 0 1 1 5.5 -4.6" stroke="#006dca" stroke-width="2.3" stroke-linecap="round"/><path d="M2.5 -2.4 H7.6 V-7.6" stroke="#006dca" stroke-width="2.3" stroke-linecap="round" stroke-linejoin="round"/></svg>
<div style="position:absolute;left:303.00px;top:576.36px;width:1282.00px;height:1.00px;background:#e0e1e9"></div>
<div style="position:absolute;left:327.60px;top:541.36px;width:19.20px;height:19.20px;background:#fff;border:1px solid #c4c7cf;border-radius:4px;box-sizing:border-box"></div>
<svg style="position:absolute;left:363.70px;top:539.06px;" width="24" height="24" viewBox="-12 -12 24 24" fill="none"><circle cx="0" cy="0" r="8.3" stroke="#a4a7b3" stroke-width="2"/><path d="M0 -3.7 V3.7 M-3.7 0 H3.7" stroke="#a4a7b3" stroke-width="2" stroke-linecap="round"/></svg>
<div id="t83" class="t" style="left:391.30px;top:543.00px;font-size:17px;line-height:17px;color:#006dca;font-weight:400;letter-spacing:0.554px;">how much food should i feed my dog</div>
<svg style="position:absolute;left:693.00px;top:544.26px;" width="17" height="16" viewBox="0 0 17 16" fill="none"><rect x="1" y="1" width="13.6" height="12.2" rx="1" stroke="#a4a7b3" stroke-width="2"/><path d="M1 6.4 H14.6 M10.6 2 V4" stroke="#a4a7b3" stroke-width="2"/></svg>
<div style="position:absolute;left:771.10px;top:541.26px;width:19.20px;height:18.90px;background:#c4e4fd;border-radius:4px"></div>
<div style="position:absolute;left:779.80px;top:545.16px;width:2.20px;height:10.30px;background:#0a62c4"></div>
<div id="t84" class="t" style="left:913.20px;top:543.00px;font-size:17px;line-height:17px;color:#191b23;font-weight:400;transform-origin:0 0;transform:scaleX(1.0763);">5,400</div>
<div id="t85" class="t" style="left:1011.11px;top:543.00px;font-size:17px;line-height:17px;color:#191b23;font-weight:400;transform-origin:0 0;transform:scaleX(1.0837);">44</div>
<div style="position:absolute;left:1041.60px;top:543.01px;width:14.70px;height:14.70px;border-radius:50%;background:#ffba3e"></div>
<div id="t86" class="t" style="left:1125.90px;top:543.00px;font-size:17px;line-height:17px;color:#191b23;font-weight:400;transform-origin:0 0;transform:scaleX(0.9903);">1.64</div>
<svg style="position:absolute;left:1177.00px;top:541.36px;" width="20" height="18" viewBox="0 0 20 18" fill="none"><path d="M9 15.45 H2.45 V3 M17.75 3 V7.7" stroke="#a4a7b3" stroke-width="2.3"/><rect x="1.3" y="1.1" width="17.6" height="3.6" rx="0.6" fill="#a4a7b3"/><circle cx="13.9" cy="11.2" r="3" stroke="#a4a7b3" stroke-width="2"/><path d="M16.1 13.4 L18.2 15.6" stroke="#a4a7b3" stroke-width="2.1" stroke-linecap="round"/></svg>
<div style="position:absolute;left:1207.20px;top:538.86px;width:1.20px;height:23.50px;background:#c4c7cf"></div>
<svg style="position:absolute;left:1215.60px;top:538.76px;" width="24" height="24" viewBox="-12 -12 24 24" fill="none"><path d="M-8.4 -2.7 L-4 0 L0 -6.4 L4 0 L8.4 -2.7 L5.4 4.8 H-5.4 Z" stroke="#a4a7b3" stroke-width="2.2" stroke-linejoin="miter" stroke-miterlimit="3"/><path d="M-5 9 H5" stroke="#a4a7b3" stroke-width="2" stroke-linecap="round"/></svg>
<svg style="position:absolute;left:1244.55px;top:539.16px;" width="24" height="24" viewBox="-12 -12 24 24" fill="none"><circle cx="0" cy="0" r="7.45" stroke="#a4a7b3" stroke-width="1.9"/><path d="M-1.6 -3.2 L3.6 0.1 L-1.6 3.5 Z" fill="#a4a7b3"/></svg>
<svg style="position:absolute;left:1273.50px;top:538.76px;" width="24" height="24" viewBox="-12 -12 24 24" fill="none"><path d="M-6.9 7.3 V-8 H7.3 V3.2 H-3 Z" stroke="#a4a7b3" stroke-width="1.8" stroke-linejoin="round"/><path d="M-1.4 -4.2 C-1.4 -6 1.6 -6 1.6 -4.2 C1.6 -2.8 0.1 -2.8 0.1 -1" stroke="#a4a7b3" stroke-width="0.9" fill="none"/><circle cx="0.1" cy="0.6" r="0.5" fill="#a4a7b3"/></svg>
<svg style="position:absolute;left:1302.45px;top:538.76px;" width="24" height="24" viewBox="-12 -12 24 24" fill="none"><path d="M-8.3 -6.2 H-2.7 M2.7 -6.2 H8.3 M-8.3 -1.4 H-2.7 M2.7 -1.4 H8.3 M-8.3 3.4 H-2.7 M2.7 3.4 H8.3 M-8.3 8.1 H-2.7 M2.7 8.1 H8.3 " stroke="#a4a7b3" stroke-width="2" stroke-linecap="round"/></svg>
<div id="t87" class="t" style="left:1456.90px;top:543.00px;font-size:17px;line-height:17px;color:#191b23;font-weight:400;letter-spacing:0.456px;">Last week</div>
<svg style="position:absolute;left:1541.60px;top:540.91px;" width="20" height="20" viewBox="-10 -10 20 20" fill="none"><path d="M5.2 5 A7.2 7.2 0 1 1 5.5 -4.6" stroke="#006dca" stroke-width="2.3" stroke-linecap="round"/><path d="M2.5 -2.4 H7.6 V-7.6" stroke="#006dca" stroke-width="2.3" stroke-linecap="round" stroke-linejoin="round"/></svg>
<div style="position:absolute;left:303.00px;top:629.49px;width:1282.00px;height:1.00px;background:#e0e1e9"></div>
<div style="position:absolute;left:327.60px;top:594.49px;width:19.20px;height:19.20px;background:#fff;border:1px solid #c4c7cf;border-radius:4px;box-sizing:border-box"></div>
<svg style="position:absolute;left:363.70px;top:592.19px;" width="24" height="24" viewBox="-12 -12 24 24" fill="none"><circle cx="0" cy="0" r="8.3" stroke="#a4a7b3" stroke-width="2"/><path d="M0 -3.7 V3.7 M-3.7 0 H3.7" stroke="#a4a7b3" stroke-width="2" stroke-linecap="round"/></svg>
<div id="t88" class="t" style="left:391.30px;top:596.00px;font-size:17px;line-height:17px;color:#006dca;font-weight:400;letter-spacing:0.577px;">is blue buffalo good dog food</div>
<svg style="position:absolute;left:632.00px;top:597.39px;" width="17" height="16" viewBox="0 0 17 16" fill="none"><rect x="1" y="1" width="13.6" height="12.2" rx="1" stroke="#a4a7b3" stroke-width="2"/><path d="M1 6.4 H14.6 M10.6 2 V4" stroke="#a4a7b3" stroke-width="2"/></svg>
<div style="position:absolute;left:771.10px;top:594.39px;width:19.20px;height:18.90px;background:#c4e4fd;border-radius:4px"></div>
<div style="position:absolute;left:779.80px;top:598.29px;width:2.20px;height:10.30px;background:#0a62c4"></div>
<div id="t89" class="t" style="left:913.20px;top:596.00px;font-size:17px;line-height:17px;color:#191b23;font-weight:400;transform-origin:0 0;transform:scaleX(1.0763);">5,400</div>
<div id="t90" class="t" style="left:1012.90px;top:596.00px;font-size:17px;line-height:17px;color:#191b23;font-weight:400;transform-origin:0 0;transform:scaleX(0.9826);">27</div>
<div style="position:absolute;left:1041.60px;top:596.14px;width:14.70px;height:14.70px;border-radius:50%;background:#5bd7a4"></div>
<div id="t91" class="t" style="left:1125.90px;top:596.00px;font-size:17px;line-height:17px;color:#191b23;font-weight:400;transform-origin:0 0;transform:scaleX(0.9903);">1.00</div>
<svg style="position:absolute;left:1177.00px;top:594.49px;" width="20" height="18" viewBox="0 0 20 18" fill="none"><path d="M9 15.45 H2.45 V3 M17.75 3 V7.7" stroke="#a4a7b3" stroke-width="2.3"/><rect x="1.3" y="1.1" width="17.6" height="3.6" rx="0.6" fill="#a4a7b3"/><circle cx="13.9" cy="11.2" r="3" stroke="#a4a7b3" stroke-width="2"/><path d="M16.1 13.4 L18.2 15.6" stroke="#a4a7b3" stroke-width="2.1" stroke-linecap="round"/></svg>
<div style="position:absolute;left:1207.20px;top:591.99px;width:1.20px;height:23.50px;background:#c4c7cf"></div>
<svg style="position:absolute;left:1215.60px;top:592.29px;" width="24" height="24" viewBox="-12 -12 24 24" fill="none"><path d="M-2 -4.8 H-3.6 A4.8 4.8 0 0 0 -3.6 4.8 H-2 M2 -4.8 H3.6 A4.8 4.8 0 0 1 3.6 4.8 H2" stroke="#a4a7b3" stroke-width="2.4"/><path d="M-2.4 0 H2.7" stroke="#a4a7b3" stroke-width="2.3" stroke-linecap="round"/></svg>
<svg style="position:absolute;left:1244.55px;top:592.29px;" width="24" height="24" viewBox="-12 -12 24 24" fill="none"><circle cx="0" cy="-5.1" r="4.4" fill="#a4a7b3"/><circle cx="0" cy="5.1" r="4.4" fill="#a4a7b3"/><circle cx="-5.1" cy="0" r="4.4" fill="#a4a7b3"/><circle cx="5.1" cy="0" r="4.4" fill="#a4a7b3"/><circle cx="0" cy="0" r="6.5" fill="#a4a7b3"/><path d="M0 -5.7 Q1.1 -1.1 5.7 0 Q1.1 1.1 0 5.7 Q-1.1 1.1 -5.7 0 Q-1.1 -1.1 0 -5.7 Z" fill="#fff"/></svg>
<svg style="position:absolute;left:1273.50px;top:591.89px;" width="24" height="24" viewBox="-12 -12 24 24" fill="none"><path d="M0.00 -7.40 L2.35 -2.64 L7.61 -1.87 L3.80 1.84 L4.70 7.07 L0.00 4.60 L-4.70 7.07 L-3.80 1.84 L-7.61 -1.87 L-2.35 -2.64 Z" stroke="#a4a7b3" stroke-width="2" stroke-linejoin="miter"/></svg>
<svg style="position:absolute;left:1302.45px;top:592.29px;" width="24" height="24" viewBox="-12 -12 24 24" fill="none"><circle cx="0" cy="0" r="7.45" stroke="#a4a7b3" stroke-width="1.9"/><path d="M-1.6 -3.2 L3.6 0.1 L-1.6 3.5 Z" fill="#a4a7b3"/></svg>
<div id="t92" class="t" style="left:1334.60px;top:596.00px;font-size:17px;line-height:17px;color:#6c6e79;font-weight:400;letter-spacing:0.000px;letter-spacing:0.7px">+2</div>
<div style="position:absolute;left:1334.60px;top:616.99px;width:21.50px;height:1.00px;background:repeating-linear-gradient(90deg,#6c6e79 0 4px,transparent 4px 6px)"></div>
<div id="t93" class="t" style="left:1456.90px;top:596.00px;font-size:17px;line-height:17px;color:#191b23;font-weight:400;letter-spacing:0.456px;">Last week</div>
<svg style="position:absolute;left:1541.60px;top:594.04px;" width="20" height="20" viewBox="-10 -10 20 20" fill="none"><path d="M5.2 5 A7.2 7.2 0 1 1 5.5 -4.6" stroke="#006dca" stroke-width="2.3" stroke-linecap="round"/><path d="M2.5 -2.4 H7.6 V-7.6" stroke="#006dca" stroke-width="2.3" stroke-linecap="round" stroke-linejoin="round"/></svg>
<div style="position:absolute;left:303.00px;top:682.62px;width:1282.00px;height:1.00px;background:#e0e1e9"></div>
<div style="position:absolute;left:327.60px;top:647.62px;width:19.20px;height:19.20px;background:#fff;border:1px solid #c4c7cf;border-radius:4px;box-sizing:border-box"></div>
<svg style="position:absolute;left:363.70px;top:645.32px;" width="24" height="24" viewBox="-12 -12 24 24" fill="none"><circle cx="0" cy="0" r="8.3" stroke="#a4a7b3" stroke-width="2"/><path d="M0 -3.7 V3.7 M-3.7 0 H3.7" stroke="#a4a7b3" stroke-width="2" stroke-linecap="round"/></svg>
<div id="t94" class="t" style="left:391.30px;top:649.00px;font-size:17px;line-height:17px;color:#006dca;font-weight:400;letter-spacing:0.597px;">how long can a dog go without food</div>
<svg style="position:absolute;left:685.00px;top:650.52px;" width="17" height="16" viewBox="0 0 17 16" fill="none"><rect x="1" y="1" width="13.6" height="12.2" rx="1" stroke="#a4a7b3" stroke-width="2"/><path d="M1 6.4 H14.6 M10.6 2 V4" stroke="#a4a7b3" stroke-width="2"/></svg>
<div style="position:absolute;left:771.10px;top:647.52px;width:19.20px;height:18.90px;background:#c4e4fd;border-radius:4px"></div>
<div style="position:absolute;left:779.80px;top:651.42px;width:2.20px;height:10.30px;background:#0a62c4"></div>
<div id="t95" class="t" style="left:912.70px;top:649.00px;font-size:17px;line-height:17px;color:#191b23;font-weight:400;transform-origin:0 0;transform:scaleX(1.0883);">3,600</div>
<div id="t96" class="t" style="left:1011.11px;top:649.00px;font-size:17px;line-height:17px;color:#191b23;font-weight:400;transform-origin:0 0;transform:scaleX(1.0837);">24</div>
<div style="position:absolute;left:1041.60px;top:649.27px;width:14.70px;height:14.70px;border-radius:50%;background:#5bd7a4"></div>
<div id="t97" class="t" style="left:1123.90px;top:649.00px;font-size:17px;line-height:17px;color:#191b23;font-weight:400;transform-origin:0 0;transform:scaleX(1.0531);">0.91</div>
<svg style="position:absolute;left:1177.00px;top:647.62px;" width="20" height="18" viewBox="0 0 20 18" fill="none"><path d="M9 15.45 H2.45 V3 M17.75 3 V7.7" stroke="#a4a7b3" stroke-width="2.3"/><rect x="1.3" y="1.1" width="17.6" height="3.6" rx="0.6" fill="#a4a7b3"/><circle cx="13.9" cy="11.2" r="3" stroke="#a4a7b3" stroke-width="2"/><path d="M16.1 13.4 L18.2 15.6" stroke="#a4a7b3" stroke-width="2.1" stroke-linecap="round"/></svg>
<div style="position:absolute;left:1207.20px;top:645.12px;width:1.20px;height:23.50px;background:#c4c7cf"></div>
<svg style="position:absolute;left:1215.60px;top:645.02px;" width="24" height="24" viewBox="-12 -12 24 24" fill="none"><path d="M-8.4 -2.7 L-4 0 L0 -6.4 L4 0 L8.4 -2.7 L5.4 4.8 H-5.4 Z" stroke="#a4a7b3" stroke-width="2.2" stroke-linejoin="miter" stroke-miterlimit="3"/><path d="M-5 9 H5" stroke="#a4a7b3" stroke-width="2" stroke-linecap="round"/></svg>
<svg style="position:absolute;left:1244.55px;top:645.42px;" width="24" height="24" viewBox="-12 -12 24 24" fill="none"><path d="M-2 -4.8 H-3.6 A4.8 4.8 0 0 0 -3.6 4.8 H-2 M2 -4.8 H3.6 A4.8 4.8 0 0 1 3.6 4.8 H2" stroke="#a4a7b3" stroke-width="2.4"/><path d="M-2.4 0 H2.7" stroke="#a4a7b3" stroke-width="2.3" stroke-linecap="round"/></svg>
<svg style="position:absolute;left:1273.50px;top:645.02px;" width="24" height="24" viewBox="-12 -12 24 24" fill="none"><path d="M0.00 -7.40 L2.35 -2.64 L7.61 -1.87 L3.80 1.84 L4.70 7.07 L0.00 4.60 L-4.70 7.07 L-3.80 1.84 L-7.61 -1.87 L-2.35 -2.64 Z" stroke="#a4a7b3" stroke-width="2" stroke-linejoin="miter"/></svg>
<svg style="position:absolute;left:1302.45px;top:645.42px;" width="24" height="24" viewBox="-12 -12 24 24" fill="none"><circle cx="0" cy="0" r="7.45" stroke="#a4a7b3" stroke-width="1.9"/><path d="M-1.6 -3.2 L3.6 0.1 L-1.6 3.5 Z" fill="#a4a7b3"/></svg>
<div id="t98" class="t" style="left:1334.60px;top:649.00px;font-size:17px;line-height:17px;color:#6c6e79;font-weight:400;letter-spacing:0.000px;letter-spacing:0.7px">+2</div>
<div style="position:absolute;left:1334.60px;top:670.12px;width:21.50px;height:1.00px;background:repeating-linear-gradient(90deg,#6c6e79 0 4px,transparent 4px 6px)"></div>
<div id="t99" class="t" style="left:1470.90px;top:649.00px;font-size:17px;line-height:17px;color:#191b23;font-weight:400;letter-spacing:0.636px;">2 weeks</div>
<svg style="position:absolute;left:1541.60px;top:647.17px;" width="20" height="20" viewBox="-10 -10 20 20" fill="none"><path d="M5.2 5 A7.2 7.2 0 1 1 5.5 -4.6" stroke="#006dca" stroke-width="2.3" stroke-linecap="round"/><path d="M2.5 -2.4 H7.6 V-7.6" stroke="#006dca" stroke-width="2.3" stroke-linecap="round" stroke-linejoin="round"/></svg>
<div style="position:absolute;left:303.00px;top:735.75px;width:1282.00px;height:1.00px;background:#e0e1e9"></div>
<div style="position:absolute;left:327.60px;top:700.75px;width:19.20px;height:19.20px;background:#fff;border:1px solid #c4c7cf;border-radius:4px;box-sizing:border-box"></div>
<svg style="position:absolute;left:363.70px;top:698.45px;" width="24" height="24" viewBox="-12 -12 24 24" fill="none"><circle cx="0" cy="0" r="8.3" stroke="#a4a7b3" stroke-width="2"/><path d="M0 -3.7 V3.7 M-3.7 0 H3.7" stroke="#a4a7b3" stroke-width="2" stroke-linecap="round"/></svg>
<div id="t100" class="t" style="left:391.30px;top:702.00px;font-size:17px;line-height:17px;color:#006dca;font-weight:400;letter-spacing:0.606px;">how long can dogs go without food</div>
<svg style="position:absolute;left:679.00px;top:703.65px;" width="17" height="16" viewBox="0 0 17 16" fill="none"><rect x="1" y="1" width="13.6" height="12.2" rx="1" stroke="#a4a7b3" stroke-width="2"/><path d="M1 6.4 H14.6 M10.6 2 V4" stroke="#a4a7b3" stroke-width="2"/></svg>
<div style="position:absolute;left:771.10px;top:700.65px;width:19.20px;height:18.90px;background:#c4e4fd;border-radius:4px"></div>
<div style="position:absolute;left:779.80px;top:704.55px;width:2.20px;height:10.30px;background:#0a62c4"></div>
<div id="t101" class="t" style="left:912.70px;top:702.00px;font-size:17px;line-height:17px;color:#191b23;font-weight:400;transform-origin:0 0;transform:scaleX(1.0883);">3,600</div>
<div id="t102" class="t" style="left:1012.90px;top:702.00px;font-size:17px;line-height:17px;color:#191b23;font-weight:400;transform-origin:0 0;transform:scaleX(0.9826);">27</div>
<div style="position:absolute;left:1041.60px;top:702.40px;width:14.70px;height:14.70px;border-radius:50%;background:#5bd7a4"></div>
<div id="t103" class="t" style="left:1123.90px;top:702.00px;font-size:17px;line-height:17px;color:#191b23;font-weight:400;transform-origin:0 0;transform:scaleX(1.0531);">0.53</div>
<svg style="position:absolute;left:1177.00px;top:700.75px;" width="20" height="18" viewBox="0 0 20 18" fill="none"><path d="M9 15.45 H2.45 V3 M17.75 3 V7.7" stroke="#a4a7b3" stroke-width="2.3"/><rect x="1.3" y="1.1" width="17.6" height="3.6" rx="0.6" fill="#a4a7b3"/><circle cx="13.9" cy="11.2" r="3" stroke="#a4a7b3" stroke-width="2"/><path d="M16.1 13.4 L18.2 15.6" stroke="#a4a7b3" stroke-width="2.1" stroke-linecap="round"/></svg>
<div style="position:absolute;left:1207.20px;top:698.25px;width:1.20px;height:23.50px;background:#c4c7cf"></div>
<svg style="position:absolute;left:1215.60px;top:698.15px;" width="24" height="24" viewBox="-12 -12 24 24" fill="none"><path d="M-8.4 -2.7 L-4 0 L0 -6.4 L4 0 L8.4 -2.7 L5.4 4.8 H-5.4 Z" stroke="#a4a7b3" stroke-width="2.2" stroke-linejoin="miter" stroke-miterlimit="3"/><path d="M-5 9 H5" stroke="#a4a7b3" stroke-width="2" stroke-linecap="round"/></svg>
<svg style="position:absolute;left:1244.55px;top:698.55px;" width="24" height="24" viewBox="-12 -12 24 24" fill="none"><path d="M-2 -4.8 H-3.6 A4.8 4.8 0 0 0 -3.6 4.8 H-2 M2 -4.8 H3.6 A4.8 4.8 0 0 1 3.6 4.8 H2" stroke="#a4a7b3" stroke-width="2.4"/><path d="M-2.4 0 H2.7" stroke="#a4a7b3" stroke-width="2.3" stroke-linecap="round"/></svg>
<svg style="position:absolute;left:1273.50px;top:698.15px;" width="24" height="24" viewBox="-12 -12 24 24" fill="none"><path d="M0.00 -7.40 L2.35 -2.64 L7.61 -1.87 L3.80 1.84 L4.70 7.07 L0.00 4.60 L-4.70 7.07 L-3.80 1.84 L-7.61 -1.87 L-2.35 -2.64 Z" stroke="#a4a7b3" stroke-width="2" stroke-linejoin="miter"/></svg>
<svg style="position:absolute;left:1302.45px;top:698.55px;" width="24" height="24" viewBox="-12 -12 24 24" fill="none"><circle cx="0" cy="0" r="7.45" stroke="#a4a7b3" stroke-width="1.9"/><path d="M-1.6 -3.2 L3.6 0.1 L-1.6 3.5 Z" fill="#a4a7b3"/></svg>
<div id="t104" class="t" style="left:1334.60px;top:702.00px;font-size:17px;line-height:17px;color:#6c6e79;font-weight:400;letter-spacing:0.000px;letter-spacing:0.7px">+2</div>
<div style="position:absolute;left:1334.60px;top:723.25px;width:21.50px;height:1.00px;background:repeating-linear-gradient(90deg,#6c6e79 0 4px,transparent 4px 6px)"></div>
<div id="t105" class="t" style="left:1456.90px;top:702.00px;font-size:17px;line-height:17px;color:#191b23;font-weight:400;letter-spacing:0.456px;">Last week</div>
<svg style="position:absolute;left:1541.60px;top:700.30px;" width="20" height="20" viewBox="-10 -10 20 20" fill="none"><path d="M5.2 5 A7.2 7.2 0 1 1 5.5 -4.6" stroke="#006dca" stroke-width="2.3" stroke-linecap="round"/><path d="M2.5 -2.4 H7.6 V-7.6" stroke="#006dca" stroke-width="2.3" stroke-linecap="round" stroke-linejoin="round"/></svg>
<div style="position:absolute;left:303.00px;top:788.88px;width:1282.00px;height:1.00px;background:#e0e1e9"></div>
<div style="position:absolute;left:327.60px;top:753.88px;width:19.20px;height:19.20px;background:#fff;border:1px solid #c4c7cf;border-radius:4px;box-sizing:border-box"></div>
<svg style="position:absolute;left:363.70px;top:751.58px;" width="24" height="24" viewBox="-12 -12 24 24" fill="none"><circle cx="0" cy="0" r="8.3" stroke="#a4a7b3" stroke-width="2"/><path d="M0 -3.7 V3.7 M-3.7 0 H3.7" stroke="#a4a7b3" stroke-width="2" stroke-linecap="round"/></svg>
<div id="t106" class="t" style="left:391.30px;top:756.00px;font-size:17px;line-height:17px;color:#006dca;font-weight:400;letter-spacing:0.485px;">is iams a good dog food</div>
<svg style="position:absolute;left:589.00px;top:756.78px;" width="17" height="16" viewBox="0 0 17 16" fill="none"><rect x="1" y="1" width="13.6" height="12.2" rx="1" stroke="#a4a7b3" stroke-width="2"/><path d="M1 6.4 H14.6 M10.6 2 V4" stroke="#a4a7b3" stroke-width="2"/></svg>
<div style="position:absolute;left:771.10px;top:753.78px;width:19.20px;height:18.90px;background:#c4e4fd;border-radius:4px"></div>
<div style="position:absolute;left:779.80px;top:757.68px;width:2.20px;height:10.30px;background:#0a62c4"></div>
<div id="t107" class="t" style="left:912.70px;top:756.00px;font-size:17px;line-height:17px;color:#191b23;font-weight:400;transform-origin:0 0;transform:scaleX(1.0883);">3,600</div>
<div id="t108" class="t" style="left:1011.11px;top:756.00px;font-size:17px;line-height:17px;color:#191b23;font-weight:400;transform-origin:0 0;transform:scaleX(1.0837);">20</div>
<div style="position:absolute;left:1041.60px;top:755.53px;width:14.70px;height:14.70px;border-radius:50%;background:#5bd7a4"></div>
<div id="t109" class="t" style="left:1123.90px;top:756.00px;font-size:17px;line-height:17px;color:#191b23;font-weight:400;transform-origin:0 0;transform:scaleX(1.0531);">7.42</div>
<svg style="position:absolute;left:1177.00px;top:753.88px;" width="20" height="18" viewBox="0 0 20 18" fill="none"><path d="M9 15.45 H2.45 V3 M17.75 3 V7.7" stroke="#a4a7b3" stroke-width="2.3"/><rect x="1.3" y="1.1" width="17.6" height="3.6" rx="0.6" fill="#a4a7b3"/><circle cx="13.9" cy="11.2" r="3" stroke="#a4a7b3" stroke-width="2"/><path d="M16.1 13.4 L18.2 15.6" stroke="#a4a7b3" stroke-width="2.1" stroke-linecap="round"/></svg>
<div style="position:absolute;left:1207.20px;top:751.38px;width:1.20px;height:23.50px;background:#c4c7cf"></div>
<svg style="position:absolute;left:1215.60px;top:751.68px;" width="24" height="24" viewBox="-12 -12 24 24" fill="none"><path d="M-2 -4.8 H-3.6 A4.8 4.8 0 0 0 -3.6 4.8 H-2 M2 -4.8 H3.6 A4.8 4.8 0 0 1 3.6 4.8 H2" stroke="#a4a7b3" stroke-width="2.4"/><path d="M-2.4 0 H2.7" stroke="#a4a7b3" stroke-width="2.3" stroke-linecap="round"/></svg>
<svg style="position:absolute;left:1244.55px;top:751.28px;" width="24" height="24" viewBox="-12 -12 24 24" fill="none"><path d="M0.00 -7.40 L2.35 -2.64 L7.61 -1.87 L3.80 1.84 L4.70 7.07 L0.00 4.60 L-4.70 7.07 L-3.80 1.84 L-7.61 -1.87 L-2.35 -2.64 Z" stroke="#a4a7b3" stroke-width="2" stroke-linejoin="miter"/></svg>
<svg style="position:absolute;left:1273.50px;top:751.68px;" width="24" height="24" viewBox="-12 -12 24 24" fill="none"><circle cx="0" cy="0" r="7.45" stroke="#a4a7b3" stroke-width="1.9"/><path d="M-1.6 -3.2 L3.6 0.1 L-1.6 3.5 Z" fill="#a4a7b3"/></svg>
<svg style="position:absolute;left:1302.45px;top:751.28px;" width="24" height="24" viewBox="-12 -12 24 24" fill="none"><path d="M-6.9 7.3 V-8 H7.3 V3.2 H-3 Z" stroke="#a4a7b3" stroke-width="1.8" stroke-linejoin="round"/><path d="M-1.4 -4.2 C-1.4 -6 1.6 -6 1.6 -4.2 C1.6 -2.8 0.1 -2.8 0.1 -1" stroke="#a4a7b3" stroke-width="0.9" fill="none"/><circle cx="0.1" cy="0.6" r="0.5" fill="#a4a7b3"/></svg>
<div id="t110" class="t" style="left:1334.60px;top:756.00px;font-size:17px;line-height:17px;color:#6c6e79;font-weight:400;letter-spacing:0.000px;letter-spacing:0.7px">+2</div>
<div style="position:absolute;left:1334.60px;top:776.38px;width:21.50px;height:1.00px;background:repeating-linear-gradient(90deg,#6c6e79 0 4px,transparent 4px 6px)"></div>
<div id="t111" class="t" style="left:1470.90px;top:756.00px;font-size:17px;line-height:17px;color:#191b23;font-weight:400;letter-spacing:0.636px;">2 weeks</div>
<svg style="position:absolute;left:1541.60px;top:753.43px;" width="20" height="20" viewBox="-10 -10 20 20" fill="none"><path d="M5.2 5 A7.2 7.2 0 1 1 5.5 -4.6" stroke="#006dca" stroke-width="2.3" stroke-linecap="round"/><path d="M2.5 -2.4 H7.6 V-7.6" stroke="#006dca" stroke-width="2.3" stroke-linecap="round" stroke-linejoin="round"/></svg>
<div style="position:absolute;left:303.00px;top:842.01px;width:1282.00px;height:1.00px;background:#e0e1e9"></div>
<div style="position:absolute;left:327.60px;top:807.01px;width:19.20px;height:19.20px;background:#fff;border:1px solid #c4c7cf;border-radius:4px;box-sizing:border-box"></div>
<svg style="position:absolute;left:363.70px;top:804.71px;" width="24" height="24" viewBox="-12 -12 24 24" fill="none"><circle cx="0" cy="0" r="8.3" stroke="#a4a7b3" stroke-width="2"/><path d="M0 -3.7 V3.7 M-3.7 0 H3.7" stroke="#a4a7b3" stroke-width="2" stroke-linecap="round"/></svg>
<div id="t112" class="t" style="left:391.30px;top:809.00px;font-size:17px;line-height:17px;color:#006dca;font-weight:400;letter-spacing:0.535px;">is pedigree a good dog food</div>
<svg style="position:absolute;left:622.50px;top:809.91px;" width="17" height="16" viewBox="0 0 17 16" fill="none"><rect x="1" y="1" width="13.6" height="12.2" rx="1" stroke="#a4a7b3" stroke-width="2"/><path d="M1 6.4 H14.6 M10.6 2 V4" stroke="#a4a7b3" stroke-width="2"/></svg>
<div style="position:absolute;left:771.10px;top:806.91px;width:19.20px;height:18.90px;background:#c4e4fd;border-radius:4px"></div>
<div style="position:absolute;left:779.80px;top:810.81px;width:2.20px;height:10.30px;background:#0a62c4"></div>
<div id="t113" class="t" style="left:912.70px;top:809.00px;font-size:17px;line-height:17px;color:#191b23;font-weight:400;transform-origin:0 0;transform:scaleX(1.0883);">3,600</div>
<div id="t114" class="t" style="left:1011.11px;top:809.00px;font-size:17px;line-height:17px;color:#191b23;font-weight:400;transform-origin:0 0;transform:scaleX(1.0837);">25</div>
<div style="position:absolute;left:1041.60px;top:808.66px;width:14.70px;height:14.70px;border-radius:50%;background:#5bd7a4"></div>
<div id="t115" class="t" style="left:1125.90px;top:809.00px;font-size:17px;line-height:17px;color:#191b23;font-weight:400;transform-origin:0 0;transform:scaleX(0.9903);">1.49</div>
<svg style="position:absolute;left:1177.00px;top:807.01px;" width="20" height="18" viewBox="0 0 20 18" fill="none"><path d="M9 15.45 H2.45 V3 M17.75 3 V7.7" stroke="#a4a7b3" stroke-width="2.3"/><rect x="1.3" y="1.1" width="17.6" height="3.6" rx="0.6" fill="#a4a7b3"/><circle cx="13.9" cy="11.2" r="3" stroke="#a4a7b3" stroke-width="2"/><path d="M16.1 13.4 L18.2 15.6" stroke="#a4a7b3" stroke-width="2.1" stroke-linecap="round"/></svg>
<div style="position:absolute;left:1207.20px;top:804.51px;width:1.20px;height:23.50px;background:#c4c7cf"></div>
<svg style="position:absolute;left:1215.60px;top:804.81px;" width="24" height="24" viewBox="-12 -12 24 24" fill="none"><path d="M-2 -4.8 H-3.6 A4.8 4.8 0 0 0 -3.6 4.8 H-2 M2 -4.8 H3.6 A4.8 4.8 0 0 1 3.6 4.8 H2" stroke="#a4a7b3" stroke-width="2.4"/><path d="M-2.4 0 H2.7" stroke="#a4a7b3" stroke-width="2.3" stroke-linecap="round"/></svg>
<svg style="position:absolute;left:1244.55px;top:804.81px;" width="24" height="24" viewBox="-12 -12 24 24" fill="none"><circle cx="0" cy="-5.1" r="4.4" fill="#a4a7b3"/><circle cx="0" cy="5.1" r="4.4" fill="#a4a7b3"/><circle cx="-5.1" cy="0" r="4.4" fill="#a4a7b3"/><circle cx="5.1" cy="0" r="4.4" fill="#a4a7b3"/><circle cx="0" cy="0" r="6.5" fill="#a4a7b3"/><path d="M0 -5.7 Q1.1 -1.1 5.7 0 Q1.1 1.1 0 5.7 Q-1.1 1.1 -5.7 0 Q-1.1 -1.1 0 -5.7 Z" fill="#fff"/></svg>
<svg style="position:absolute;left:1273.50px;top:804.41px;" width="24" height="24" viewBox="-12 -12 24 24" fill="none"><path d="M0.00 -7.40 L2.35 -2.64 L7.61 -1.87 L3.80 1.84 L4.70 7.07 L0.00 4.60 L-4.70 7.07 L-3.80 1.84 L-7.61 -1.87 L-2.35 -2.64 Z" stroke="#a4a7b3" stroke-width="2" stroke-linejoin="miter"/></svg>
<svg style="position:absolute;left:1302.45px;top:804.81px;" width="24" height="24" viewBox="-12 -12 24 24" fill="none"><circle cx="0" cy="0" r="7.45" stroke="#a4a7b3" stroke-width="1.9"/><path d="M-1.6 -3.2 L3.6 0.1 L-1.6 3.5 Z" fill="#a4a7b3"/></svg>
<div id="t116" class="t" style="left:1334.60px;top:809.00px;font-size:17px;line-height:17px;color:#6c6e79;font-weight:400;letter-spacing:0.000px;letter-spacing:0.7px">+3</div>
<div style="position:absolute;left:1334.60px;top:829.51px;width:21.50px;height:1.00px;background:repeating-linear-gradient(90deg,#6c6e79 0 4px,transparent 4px 6px)"></div>
<div id="t117" class="t" style="left:1470.90px;top:809.00px;font-size:17px;line-height:17px;color:#191b23;font-weight:400;letter-spacing:0.636px;">2 weeks</div>
<svg style="position:absolute;left:1541.60px;top:806.56px;" width="20" height="20" viewBox="-10 -10 20 20" fill="none"><path d="M5.2 5 A7.2 7.2 0 1 1 5.5 -4.6" stroke="#006dca" stroke-width="2.3" stroke-linecap="round"/><path d="M2.5 -2.4 H7.6 V-7.6" stroke="#006dca" stroke-width="2.3" stroke-linecap="round" stroke-linejoin="round"/></svg>
<svg style="position:absolute;left:0.00px;top:0.00px;pointer-events:none" width="1600" height="842" viewBox="0 0 1600 842" fill="none"><path d="M974 180 C915 188 820 228 799 278" stroke="#f87a74" stroke-width="5.5" stroke-linecap="butt" fill="none"/><path d="M787 267.8 L811 285.6 L781.6 300.7 Z" fill="#f87a74"/></svg>
</body></html>
